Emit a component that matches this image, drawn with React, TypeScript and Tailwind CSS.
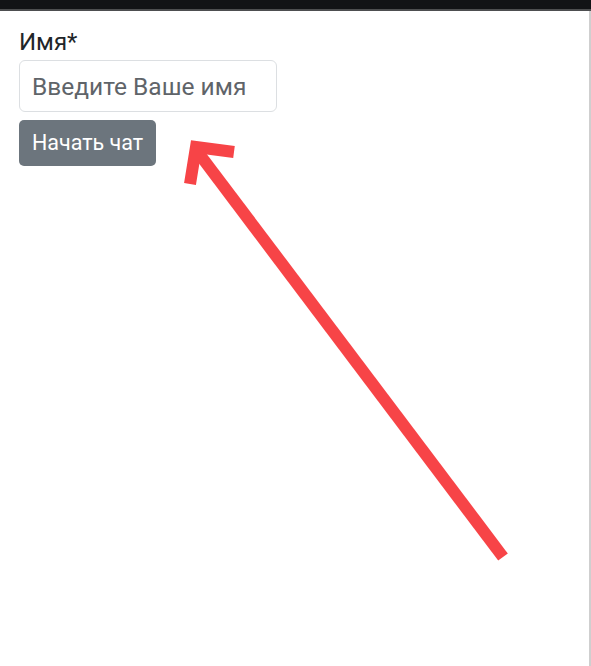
import React from 'react';

function Arrow() {
  return (
    <svg
      className="pointer-events-none absolute inset-0"
      width="591"
      height="666"
      viewBox="0 0 591 666"
    >
      <g stroke="#f74447" strokeWidth="12" fill="none">
        <line x1="503" y1="557" x2="197" y2="151" strokeLinecap="butt" />
        <polyline points="234,152 196,147 190,184" strokeLinejoin="miter" strokeMiterlimit="10" />
      </g>
    </svg>
  );
}

export default function App() {
  return (
    <div className="relative h-[666px] w-[591px] overflow-hidden bg-white font-['Roboto',sans-serif]">
      <div className="h-[9px] bg-[#121316]" />
      <div className="h-[2px] bg-[#4d4e50]" />
      <div className="flex h-[655px] flex-col items-start border-r-2 border-[#cfcfcf] pl-[19px] pt-[17px]">
        <label className="text-[24px] leading-[28px] text-[#212529]">Имя*</label>
        <input
          type="text"
          placeholder="Введите Ваше имя"
          className="mt-[4px] h-[52px] w-[258px] rounded-[6px] border border-[#dcdfe2] bg-white px-[12px] text-[24.5px] text-[#212529] outline-none placeholder:text-[#5f6469]"
        />
        <button className="mt-[8px] h-[46px] w-[137px] rounded-[5px] bg-[#6c757d] pl-[13px] text-left text-[21.5px] leading-none text-white">
          Начать чат
        </button>
      </div>
      <Arrow />
    </div>
  );
}
